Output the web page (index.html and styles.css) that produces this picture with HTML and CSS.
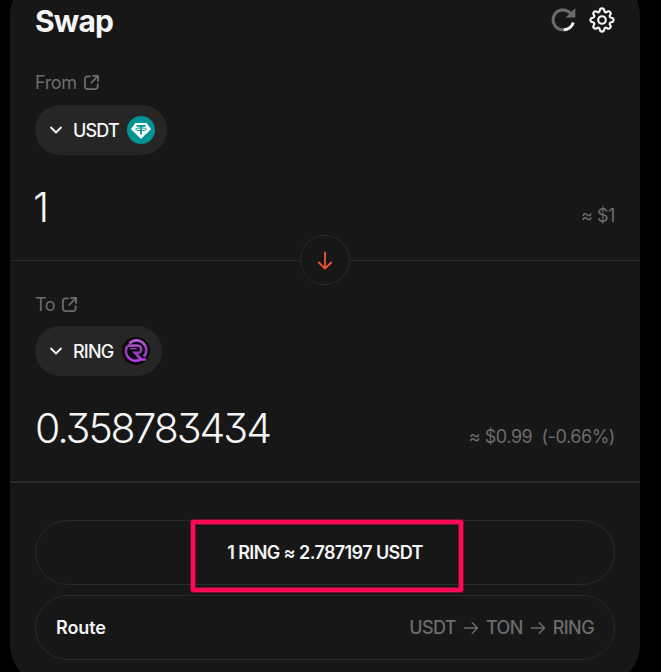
FILE: index.html
```html
<!DOCTYPE html>
<html lang="en">
<head>
    <meta charset="UTF-8">
    <meta name="viewport" content="width=device-width, initial-scale=1.0">
    <title>Swap</title>
    <link rel="stylesheet" href="styles.css">
</head>
<body>
    <main class="card">
        <header class="header">
            <h1>Swap</h1>
            <div class="actions">
                <svg width="26" height="26" viewBox="0 0 26 26" fill="none">
                    <path d="M19.3 6.1A9.9 9.9 0 1 0 12.6 22.7" stroke="#6c6c6c" stroke-width="3"/>
                    <path d="M12.6 22.7A9.9 9.9 0 0 0 22.3 15.5" stroke="#f5f5f5" stroke-width="3"/>
                    <path d="M24.3 1V10.6H14.4z" fill="#6c6c6c"/>
                </svg>
                <svg width="28" height="28" viewBox="0 0 28 28" fill="none" stroke="#f5f5f5" stroke-width="2.1" stroke-linejoin="round">
                    <path d="M11.7 4.8C12 1.6 16 1.6 16.3 4.8C16.6 6.4 17.8 6.8 19 5.9C21.3 4.2 23.8 6.7 22.1 9C21.2 10.2 21.6 11.4 23.2 11.7C26.4 12 26.4 16 23.2 16.3C21.6 16.6 21.2 17.8 22.1 19C23.8 21.3 21.3 23.8 19 22.1C17.8 21.2 16.6 21.6 16.3 23.2C16 26.4 12 26.4 11.7 23.2C11.4 21.6 10.2 21.2 9 22.1C6.7 23.8 4.2 21.3 5.9 19C6.8 17.8 6.4 16.6 4.8 16.3C1.6 16 1.6 12 4.8 11.7C6.4 11.4 6.8 10.2 5.9 9C4.2 6.7 6.7 4.2 9 5.9C10.2 6.8 11.4 6.4 11.7 4.8Z"/>
                    <circle cx="14" cy="14" r="3.8"/>
                </svg>
            </div>
        </header>

        <section class="side from">
            <div class="label">
                <span>From</span>
                <svg width="15" height="15" viewBox="0 0 16 16" fill="none" stroke="#6c6c6c" stroke-width="1.9" stroke-linecap="round" stroke-linejoin="round">
                    <path d="M6.3 1.4H4A3 3 0 0 0 1 4.4V12A3 3 0 0 0 4 15H11.6A3 3 0 0 0 14.6 12V9.7M9.7 1H15V6.3M15 1L7.7 8.3"/>
                </svg>
            </div>
            <button class="token">
                <svg width="14" height="10" viewBox="0 0 14 10" fill="none" stroke="#f5f5f5" stroke-width="1.8" stroke-linecap="round" stroke-linejoin="round">
                    <path d="M2 2.5L7 7.5L12 2.5"/>
                </svg>
                <span class="token-name">USDT</span>
                <svg width="28" height="28" viewBox="0 0 28 28">
                    <circle cx="14" cy="14" r="14" fill="#009393"/>
                    <path d="M8.3 7H19.7L24 13.3L14 23L4 13.3Z" fill="#fff"/>
                    <path d="M9.5 9.9H18.5M14 10V18.5" stroke="#009393" stroke-width="1.8"/>
                    <ellipse cx="14" cy="13.3" rx="5.5" ry="1.4" fill="none" stroke="#009393" stroke-width=".9"/>
                </svg>
            </button>
            <div class="amounts">
                <span class="amount one">1</span>
                <span class="value">≈ $1</span>
            </div>
            <button class="switch">
                <svg width="18" height="20" viewBox="0 0 18 20" fill="none" stroke="#ed5433" stroke-width="1.8" stroke-linecap="round" stroke-linejoin="round">
                    <path d="M9 2.5V18.5M2.8 12.5L9 18.5L15.2 12.5"/>
                </svg>
            </button>
        </section>

        <section class="side to">
            <div class="label">
                <span>To</span>
                <svg width="15" height="15" viewBox="0 0 16 16" fill="none" stroke="#6c6c6c" stroke-width="1.9" stroke-linecap="round" stroke-linejoin="round">
                    <path d="M6.3 1.4H4A3 3 0 0 0 1 4.4V12A3 3 0 0 0 4 15H11.6A3 3 0 0 0 14.6 12V9.7M9.7 1H15V6.3M15 1L7.7 8.3"/>
                </svg>
            </div>
            <button class="token ring">
                <svg width="14" height="10" viewBox="0 0 14 10" fill="none" stroke="#f5f5f5" stroke-width="1.8" stroke-linecap="round" stroke-linejoin="round">
                    <path d="M2 2.5L7 7.5L12 2.5"/>
                </svg>
                <span class="token-name">RING</span>
                <svg width="28" height="28" viewBox="0 0 28 28" fill="none">
                    <defs>
                        <linearGradient id="purple" gradientUnits="userSpaceOnUse" x1="0" y1="3" x2="0" y2="25">
                            <stop offset="0" stop-color="#b65bd8"/>
                            <stop offset=".5" stop-color="#8c3cb2"/>
                            <stop offset="1" stop-color="#c13bf5"/>
                        </linearGradient>
                    </defs>
                    <circle cx="14" cy="14" r="14" fill="#0a080b"/>
                    <path d="M5.2 9.2A9.7 9.7 0 0 0 18.6 22.3M7.4 6.6A9.7 9.7 0 0 1 21.8 19.6" stroke="url(#purple)" stroke-width="2.7"/>
                    <path d="M5.5 8.6H15.2C20.6 8.6 20.6 15.9 15.2 15.9H13L19.3 22.5H24" stroke="url(#purple)" stroke-width="2.7"/>
                    <path d="M8 11.7H14.8" stroke="#8f3fb3" stroke-width="1.4"/>
                </svg>
            </button>
            <div class="amounts">
                <span class="amount">0.358783434</span>
                <span class="value">≈ $0.99&nbsp; (-0.66%)</span>
            </div>
        </section>

        <section class="details">
            <div class="row rate">
                <span>1 RING ≈ 2.787197 USDT</span>
                <div class="highlight"></div>
            </div>
            <div class="row route">
                <span>Route</span>
                <div class="path">
                    <span>USDT</span>
                    <svg width="16" height="14" viewBox="0 0 16 14" fill="none" stroke="#6c6c6c" stroke-width="1.5" stroke-linecap="round" stroke-linejoin="round">
                        <path d="M1.5 7H14.5M9.3 1.8L14.5 7L9.3 12.2"/>
                    </svg>
                    <span>TON</span>
                    <svg width="16" height="14" viewBox="0 0 16 14" fill="none" stroke="#6c6c6c" stroke-width="1.5" stroke-linecap="round" stroke-linejoin="round">
                        <path d="M1.5 7H14.5M9.3 1.8L14.5 7L9.3 12.2"/>
                    </svg>
                    <span>RING</span>
                </div>
            </div>
        </section>
    </main>
</body>
</html>
```
FILE: styles.css
```css
* {
    box-sizing: border-box;
}
html {
    height: 100%;
    overflow: hidden;
}
body {
    margin: 0;
    height: 100%;
    overflow: hidden;
    background-color: #000;
    color: #f5f5f5;
    font-family: Inter, "Open Sans", sans-serif;
    font-size: 18px;
}
.card {
    width: 630px;
    height: 710px;
    margin: -25px 0 0 10px;
    background-color: #171717;
    border-radius: 40px;
}
.header {
    display: flex;
    justify-content: space-between;
    height: 84px;
    padding: 25px 24px 0 25px;
}
.header h1 {
    margin: 0;
    font-size: 30px;
    line-height: 42px;
    font-weight: 700;
    letter-spacing: -0.8px;
}
.actions {
    display: flex;
    align-items: center;
    gap: 11px;
    height: 40px;
}
.side {
    position: relative;
    height: 202px;
    padding: 11px 25px 0;
    border-bottom: 1px solid #292929;
}
.side.to {
    height: 222px;
    padding-top: 31px;
    border-bottom-width: 2px;
}
.label {
    display: flex;
    align-items: center;
    gap: 7px;
    height: 24px;
    color: #6c6c6c;
    letter-spacing: -0.4px;
}
.token {
    display: flex;
    align-items: center;
    width: 132px;
    height: 50px;
    margin-top: 11px;
    padding: 0 12px 0 14px;
    border: none;
    border-radius: 25px;
    background-color: #262626;
    color: #f5f5f5;
    font: inherit;
}
.token.ring {
    width: 127px;
    margin-top: 10px;
}
.token-name {
    flex: 1;
    margin-left: 10px;
    text-align: left;
    font-weight: 500;
    letter-spacing: -0.8px;
}
.amounts {
    display: flex;
    justify-content: space-between;
    margin-top: 26px;
}
.amount {
    font-size: 41px;
    line-height: 52px;
    font-weight: 350;
    letter-spacing: -2.1px;
    font-feature-settings: "cv09";
}
.amount.one {
    margin-left: -2px;
}
.value {
    padding-top: 23px;
    line-height: 24px;
    color: #6c6c6c;
    letter-spacing: -0.45px;
}
.switch {
    position: absolute;
    left: 290px;
    bottom: -25px;
    display: flex;
    align-items: center;
    justify-content: center;
    width: 50px;
    height: 50px;
    padding: 0;
    border: 1px solid #292929;
    border-radius: 50%;
    background-color: #171717;
    z-index: 1;
}
.details {
    display: flex;
    flex-direction: column;
    gap: 10px;
    padding: 37px 25px 0;
}
.row {
    display: flex;
    align-items: center;
    height: 65px;
    padding: 0 20px;
    border: 1px solid #292929;
    border-radius: 33px;
    font-weight: 600;
    letter-spacing: -0.6px;
}
.rate {
    position: relative;
    justify-content: center;
}
.highlight {
    position: absolute;
    left: 155px;
    top: -1px;
    width: 272px;
    height: 72px;
    border: 4px solid #ff0a55;
    border-radius: 2px;
    box-shadow: 0 0 0 1px rgba(255, 10, 85, 0.4), inset 0 0 0 1px rgba(255, 10, 85, 0.4);
}
.route {
    justify-content: space-between;
    letter-spacing: -0.1px;
}
.path {
    display: flex;
    align-items: center;
    gap: 7px;
    color: #6c6c6c;
    font-weight: 500;
    letter-spacing: -0.6px;
}
```
